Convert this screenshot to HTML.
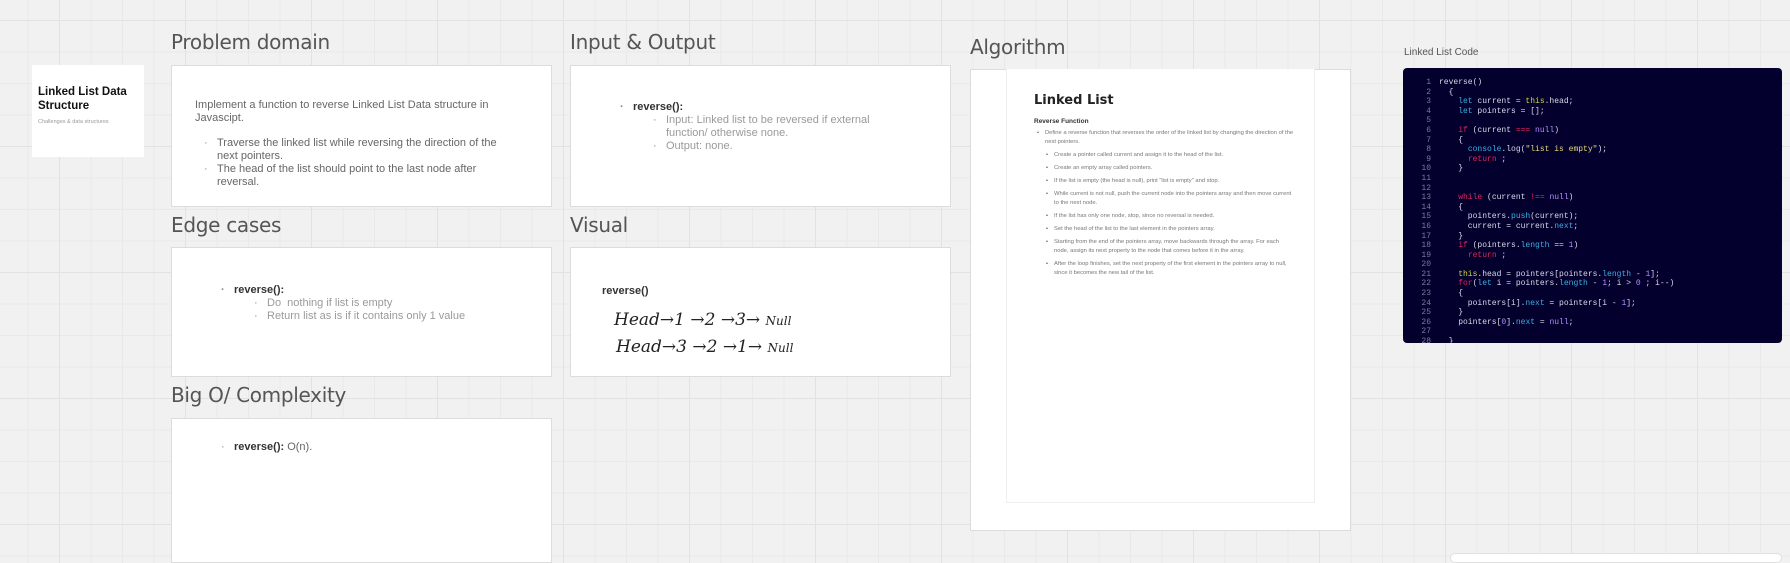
<!DOCTYPE html>
<html><head><meta charset="utf-8"><style>
*{margin:0;padding:0;box-sizing:border-box}
body{width:1790px;height:558px;overflow:hidden;position:relative;font-family:"Liberation Sans",sans-serif;
background-color:#f1f1f1;
background-image:
linear-gradient(to right,#e2e2e2 1px,transparent 1px),
linear-gradient(to bottom,#e2e2e2 1px,transparent 1px),
linear-gradient(to right,#e9e9e9 1px,transparent 1px),
linear-gradient(to bottom,#e9e9e9 1px,transparent 1px);
background-size:126px 126px,126px 126px,31.5px 31.5px,31.5px 31.5px;
background-position:59px 0,0 20px,27.5px 0,0 20px;}
.abs{position:absolute}
.card{position:absolute;background:#fff;border:1px solid #dcdcdc}
.title{position:absolute;font-family:"DejaVu Sans",sans-serif;font-size:20px;color:#555;letter-spacing:-0.3px}
.t{font-size:11px;color:#666;line-height:13px}
ul{list-style:none}
.b{position:relative;padding-left:0}
.b:before{content:"·";position:absolute;left:-13px;color:#888}
.g{color:#9a9a9a}
.bold{font-weight:bold;color:#333}
.code{position:absolute;left:1403px;top:68px;width:379px;height:275px;background:#03002e;border-radius:4px;overflow:hidden;font-family:"Liberation Mono",monospace;font-size:8px;line-height:9.6px;color:#d8d8e8;padding-top:10px}
.code .n{position:absolute;left:12px;width:16px;text-align:right;color:#7a7a9a}
.code .c{position:absolute;left:36px;white-space:pre}
.k{color:#e0245e}.f{color:#3ab0e0}.v{color:#b58cff}.y{color:#c9d44a}.s{color:#e6d57a}
.hand{font-family:"DejaVu Serif",serif;font-style:italic;font-size:17px;color:#222;position:absolute;white-space:pre}
.alg li{font-size:5.8px;line-height:9px;color:#777;margin-bottom:4px;position:relative}
.alg li:before{content:"•";position:absolute;left:-8px;color:#557}
</style></head><body>

<div class="card" style="left:32px;top:65px;width:112px;height:92px;border:none">
<div class="abs" style="left:6px;top:20px;font-size:11.5px;font-weight:bold;line-height:14px;color:#111">Linked List Data<br>Structure</div>
<div class="abs" style="left:6px;top:54px;font-size:5.5px;color:#999">Challenges &amp; data structures</div>
</div>

<div class="title" style="left:171px;top:30px">Problem domain</div>
<div class="card" style="left:171px;top:65px;width:381px;height:142px">
<div class="abs t" style="left:23px;top:33px;width:330px">Implement a function to reverse Linked List Data structure in Javascipt.</div>
<ul class="abs t" style="left:45px;top:71px;width:300px">
<li class="b">Traverse the linked list while reversing the direction of the next pointers.</li>
<li class="b">The head of the list should point to the last node after reversal.</li></ul>
</div>

<div class="title" style="left:171px;top:213px">Edge cases</div>
<div class="card" style="left:171px;top:247px;width:381px;height:130px">
<ul class="abs t" style="left:62px;top:36px;width:300px">
<li class="b bold">reverse():</li>
<li class="b g" style="margin-left:33px">Do &nbsp;nothing if list is empty</li>
<li class="b g" style="margin-left:33px">Return list as is if it contains only 1 value</li></ul>
</div>

<div class="title" style="left:171px;top:383px">Big O/ Complexity</div>
<div class="card" style="left:171px;top:418px;width:381px;height:145px">
<ul class="abs t" style="left:62px;top:22px"><li class="b"><span class="bold">reverse():</span> O(n).</li></ul>
</div>

<div class="title" style="left:570px;top:30px">Input &amp; Output</div>
<div class="card" style="left:570px;top:65px;width:381px;height:142px">
<ul class="abs t" style="left:62px;top:35px;width:280px">
<li class="b bold">reverse():</li>
<li class="b g" style="margin-left:33px">Input: Linked list to be reversed if external function/ otherwise none.</li>
<li class="b g" style="margin-left:33px">Output: none.</li></ul>
</div>

<div class="title" style="left:570px;top:213px">Visual</div>
<div class="card" style="left:570px;top:247px;width:381px;height:130px">
<div class="abs" style="left:31px;top:37px;font-size:11px;font-weight:bold;color:#333">reverse()</div>
<div class="hand" style="left:43px;top:62px">Head→1 →2 →3→ <span style="font-size:12px">Null</span></div>
<div class="hand" style="left:45px;top:89px">Head→3 →2 →1→ <span style="font-size:12px">Null</span></div>
</div>

<div class="title" style="left:970px;top:35px">Algorithm</div>
<div class="card" style="left:970px;top:69px;width:381px;height:462px">
<div class="abs" style="left:35px;top:-1px;width:309px;height:434px;border:1px solid #eee;border-top:none;background:#fff">
<div class="abs" style="left:27px;top:24px;font-size:13px;font-weight:bold;color:#222;font-family:'DejaVu Sans',sans-serif">Linked List</div>
<div class="abs" style="left:27px;top:49px;font-size:6.5px;font-weight:bold;color:#333">Reverse Function</div>
<ul class="abs alg" style="left:38px;top:60px;width:250px">
<li>Define a reverse function that reverses the order of the linked list by changing the direction of the next pointers.</li>
<ul style="margin-left:9px;list-style:none">
<li>Create a pointer called current and assign it to the head of the list.</li>
<li>Create an empty array called pointers.</li>
<li>If the list is empty (the head is null), print "list is empty" and stop.</li>
<li>While current is not null, push the current node into the pointers array and then move current to the next node.</li>
<li>If the list has only one node, stop, since no reversal is needed.</li>
<li>Set the head of the list to the last element in the pointers array.</li>
<li>Starting from the end of the pointers array, move backwards through the array. For each node, assign its next property to the node that comes before it in the array.</li>
<li>After the loop finishes, set the next property of the first element in the pointers array to null, since it becomes the new tail of the list.</li>
</ul></ul>
</div></div>

<div class="abs" style="left:1404px;top:47px;font-size:10px;color:#555">Linked List Code</div>
<div class="code">
<div class="n" style="top:10px">1<br>2<br>3<br>4<br>5<br>6<br>7<br>8<br>9<br>10<br>11<br>12<br>13<br>14<br>15<br>16<br>17<br>18<br>19<br>20<br>21<br>22<br>23<br>24<br>25<br>26<br>27<br>28</div>
<div class="c" style="top:10px">reverse()
  {
    <span class="f">let</span> current = <span class="y">this</span>.head;
    <span class="f">let</span> pointers = [];

    <span class="k">if</span> (current <span class="k">===</span> <span class="v">null</span>)
    {
      <span class="f">console</span>.log(<span class="s">"list is empty"</span>);
      <span class="k">return</span> ;
    }


    <span class="k">while</span> (current <span class="k">!==</span> <span class="v">null</span>)
    {
      pointers.<span class="f">push</span>(current);
      current = current.<span class="f">next</span>;
    }
    <span class="k">if</span> (pointers.<span class="f">length</span> == <span class="v">1</span>)
      <span class="k">return</span> ;

    <span class="y">this</span>.head = pointers[pointers.<span class="f">length</span> - <span class="v">1</span>];
    <span class="k">for</span>(<span class="f">let</span> i = pointers.<span class="f">length</span> - <span class="v">1</span>; i &gt; <span class="v">0</span> ; i--)
    {
      pointers[i].<span class="f">next</span> = pointers[i - <span class="v">1</span>];
    }
    pointers[<span class="v">0</span>].<span class="f">next</span> = <span class="v">null</span>;

  }</div>
</div>

<div class="abs" style="left:1450px;top:553px;width:332px;height:10px;background:#fff;border:1px solid #e0e0e0;border-radius:5px"></div>
</body></html>
